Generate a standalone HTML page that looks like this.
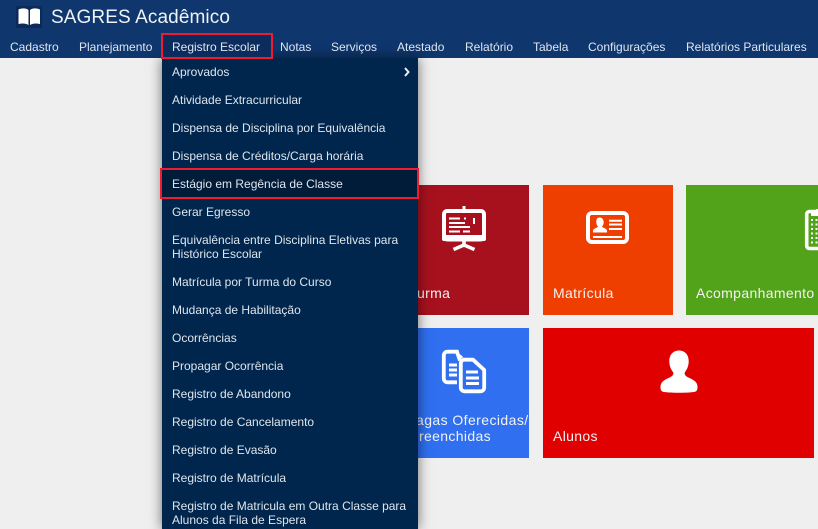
<!DOCTYPE html>
<html lang="pt-BR">
<head>
<meta charset="utf-8">
<title>SAGRES Acadêmico</title>
<style>
html,body{margin:0;padding:0;}
body{width:818px;height:529px;overflow:hidden;position:relative;background:#efefef;font-family:"Liberation Sans",sans-serif;}
.hdr{position:absolute;left:0;top:0;width:818px;height:58px;background:#0f366d;}
.title{position:absolute;left:51px;top:6px;font-size:19px;line-height:24px;color:#eef3f8;letter-spacing:.1px;white-space:nowrap;}
.logo{position:absolute;left:16px;top:6px;width:26px;height:22px;background:#0b2a57;}
.nav{position:absolute;top:39px;font-size:12px;line-height:16px;color:#dde6f0;white-space:nowrap;z-index:6;}
.regbox{position:absolute;left:161px;top:33px;width:108px;height:22px;border:2px solid #ee1c2e;background:#0b2c5c;z-index:5;}
.menu{position:absolute;left:162px;top:58px;width:256px;height:471px;background:#00264d;box-shadow:0 0 12px rgba(0,0,0,.55);}
.it{position:absolute;left:10px;font-size:12px;line-height:14px;color:#dfe5ec;white-space:nowrap;}
.sel{position:absolute;left:160px;top:168px;width:255px;height:27px;border:2px solid #ee1c2e;background:#011c38;}
.tile{position:absolute;overflow:hidden;}
.lbl{position:absolute;font-size:14px;line-height:16px;letter-spacing:.35px;color:#f2f2f2;white-space:nowrap;}
svg{position:absolute;display:block;}
</style>
</head>
<body>
<div class="tile" style="left:400px;top:185px;width:129px;height:130px;background:#a7111e"></div>
<div class="tile" style="left:543px;top:185px;width:130px;height:130px;background:#ee3e00"></div>
<div class="tile" style="left:686px;top:185px;width:132px;height:130px;background:#52a319"></div>
<div class="tile" style="left:400px;top:328px;width:129px;height:130px;background:#2f6ff0"></div>
<div class="tile" style="left:543px;top:328px;width:271px;height:130px;background:#e00000"></div>

<div class="lbl" style="left:417px;top:285px">urma</div>
<div class="lbl" style="left:553px;top:285px">Matrícula</div>
<div class="lbl" style="left:696px;top:285px">Acompanhamento</div>
<div class="lbl" style="left:416px;top:412px;letter-spacing:.42px">agas Oferecidas/</div>
<div class="lbl" style="left:419px;top:428px">reenchidas</div>
<div class="lbl" style="left:553px;top:428px">Alunos</div>

<!-- presentation -->
<svg style="left:440px;top:204px" width="48" height="48" viewBox="0 0 48 48">
<rect x="4" y="7" width="40" height="28.500" rx="3" fill="none" stroke="#fff" stroke-width="4"/>
<rect x="2" y="31" width="44" height="6" rx="2" fill="#fff"/>
<rect x="22.500" y="2" width="3" height="4" fill="#fff"/>
<path d="M24 37v5M24 41l-10.500 4.500M24 41l10.500 4.500" stroke="#fff" stroke-width="3.600" fill="none"/>
<path d="M9 14.500h11M24 14.500h2M9 19h16M9 23h21M9 27.500h11M23 27.500h7" stroke="#fff" stroke-width="2" fill="none"/>
<rect x="33" y="14" width="2" height="6" fill="#fff"/>
</svg>

<!-- id card -->
<svg style="left:585px;top:210px" width="46" height="36" viewBox="0 0 46 36">
<rect x="3" y="3" width="39" height="29" rx="4" fill="none" stroke="#fff" stroke-width="4"/>
<path d="M14.500 7.500c2.800 0 4.200 2.200 4.200 4.700 0 1.900-.8 3.400-1.700 4.200.2 1.500 5 1.900 5 4.300v1.800H8v-1.800c0-2.400 4.800-2.800 5-4.300-.9-.8-1.700-2.300-1.700-4.200 0-2.500 .4-4.700 3.200-4.700z" fill="#fff"/>
<path d="M24 10.700h13M24 14.500h13M24 19h13M8 27h29" stroke="#fff" stroke-width="2" fill="none"/>
</svg>

<!-- calc/clipboard -->
<svg style="left:804px;top:207px" width="14" height="44" viewBox="0 0 14 44">
<path d="M14 4.500H5.500a2.800 2.800 0 0 0-2.800 2.800v31.400a2.800 2.800 0 0 0 2.800 2.800H14" fill="none" stroke="#fff" stroke-width="3.600"/>
<rect x="7" y="3" width="7" height="6" fill="#fff"/>
<rect x="12" y="2" width="2" height="3" fill="#fff"/>
<path d="M8 12v27M12.500 12v27" stroke="#fff" stroke-width="2" stroke-dasharray="2 2.500" fill="none"/>
</svg>

<!-- documents -->
<svg style="left:440px;top:349px" width="48" height="46" viewBox="0 0 48 46">
<path d="M20 11.500c-1-3-2-5-3-8.800H7.500a3.700 3.700 0 0 0-3.700 3.700v23.200a3.700 3.700 0 0 0 3.700 3.700H17" fill="none" stroke="#fff" stroke-width="3.800"/>
<path d="M15 2.700h2l6.500 5.500-5 2z" fill="#fff"/>
<path d="M9 16h8M9 21h8M9 26h8" stroke="#fff" stroke-width="3" fill="none"/>
<path d="M24.500 10.700a3.700 3.700 0 0 0-3.700 3.700v24.200a3.700 3.700 0 0 0 3.700 3.700h16a3.700 3.700 0 0 0 3.700-3.700V21L33 10.700z" fill="#2f6ff0" stroke="#fff" stroke-width="3.800" stroke-linejoin="round"/>
<path d="M26 23h12M26 29h13M26 34.500h13" stroke="#fff" stroke-width="3" fill="none"/>
</svg>

<!-- person -->
<svg style="left:660px;top:350px" width="38" height="44" viewBox="0 0 38 44">
<path d="M19 .5C25 .5 28.700 5 28.700 11 28.700 16 27 19.500 25 22 24 24 25 25.500 27 26.700 31 29 37.500 30.500 37.500 37 37.500 40.500 36.500 41.500 34 42 26 43 12 43 4 42 1.500 41.500 .5 40.500 .5 37 .5 30.500 7 29 11 26.700 13 25.500 14 24 13 22 11 19.500 9.300 16 9.300 11 9.300 5 13 .5 19 .5z" fill="#fff"/>
</svg>

<div class="hdr"></div>
<div class="logo"></div>
<svg style="left:16px;top:6px" width="26" height="22" viewBox="0 0 26 22">
<path d="M2.500 3.500c3.500-1.500 7.500-1.500 10 .5v15c-2.500-1.700-6.500-1.900-10-.9z" fill="#fff"/>
<path d="M24 3.500c-3.500-1.500-7.500-1.500-10 .5v15c2.500-1.700 6.500-1.900 10-.9z" fill="#fff"/>
</svg>
<div class="title">SAGRES Acadêmico</div>

<div class="regbox"></div>
<div class="nav" style="left:10px">Cadastro</div>
<div class="nav" style="left:79px">Planejamento</div>
<div class="nav" style="left:172px">Registro Escolar</div>
<div class="nav" style="left:280px">Notas</div>
<div class="nav" style="left:331px">Serviços</div>
<div class="nav" style="left:397px">Atestado</div>
<div class="nav" style="left:465px">Relatório</div>
<div class="nav" style="left:533px">Tabela</div>
<div class="nav" style="left:588px">Configurações</div>
<div class="nav" style="left:686px">Relatórios Particulares</div>

<div class="menu">
<div class="it" style="top:7px">Aprovados</div>
<svg style="left:241px;top:9px" width="8" height="10" viewBox="0 0 8 10"><path d="M2 1l3.500 4L2 9" fill="none" stroke="#e8edf2" stroke-width="2"/></svg>
<div class="it" style="top:35px">Atividade Extracurricular</div>
<div class="it" style="top:63px">Dispensa de Disciplina por Equivalência</div>
<div class="it" style="top:91px">Dispensa de Créditos/Carga horária</div>
<div class="it" style="top:147px">Gerar Egresso</div>
<div class="it" style="top:175px">Equivalência entre Disciplina Eletivas para<br>Histórico Escolar</div>
<div class="it" style="top:217px">Matrícula por Turma do Curso</div>
<div class="it" style="top:245px">Mudança de Habilitação</div>
<div class="it" style="top:273px">Ocorrências</div>
<div class="it" style="top:301px">Propagar Ocorrência</div>
<div class="it" style="top:329px">Registro de Abandono</div>
<div class="it" style="top:357px">Registro de Cancelamento</div>
<div class="it" style="top:385px">Registro de Evasão</div>
<div class="it" style="top:413px">Registro de Matrícula</div>
<div class="it" style="top:441px">Registro de Matricula em Outra Classe para<br>Alunos da Fila de Espera</div>
</div>
<div class="sel"></div>
<div class="it" style="left:172px;top:177px">Estágio em Regência de Classe</div>
</body>
</html>
